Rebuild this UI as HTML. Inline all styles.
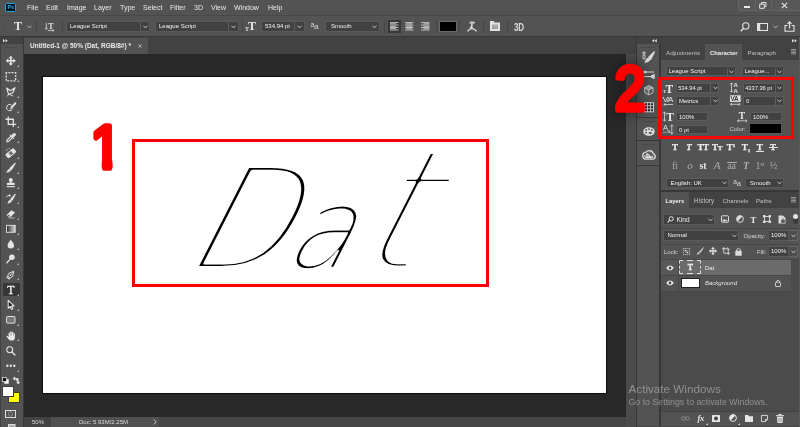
<!DOCTYPE html>
<html lang="en"><head><meta charset="utf-8"><title>Photoshop</title>
<style>
*{box-sizing:border-box;margin:0;padding:0}
html,body{width:800px;height:427px;overflow:hidden;background:#282828;font-family:"Liberation Sans",sans-serif;font-size:7px;color:#dadada;line-height:1}
.a{position:absolute}
.t{position:absolute;white-space:nowrap;line-height:8px;height:8px}
.pbg{background:#535353}
.dk{background:#424242}
.fld{position:absolute;background:#414141;border:1px solid #5a5a5a;border-radius:1px;color:#f2f2f2;font-size:6px;line-height:9px;padding-left:3px;white-space:nowrap;overflow:hidden}
.sep{position:absolute;width:1px;background:#474747}
svg{position:absolute;overflow:visible}
</style></head><body><div id="app" style="position:absolute;left:0;top:0;width:800px;height:427px;overflow:hidden;will-change:transform">

<!-- ===== menu bar ===== -->
<div class="a pbg" style="left:0;top:0;width:800px;height:15px"></div>
<div class="a" style="left:0;top:15px;width:800px;height:1px;background:#484848"></div>
<div class="a" id="pslogo" style="left:5.3px;top:2.8px;width:10.8px;height:9.6px;background:#04131d;border:1px solid #27a3dc;border-radius:1.5px;color:#2fb0ea;font-size:5.4px;font-weight:bold;line-height:7.8px;text-align:center;letter-spacing:-.2px">Ps</div>
<div class="t" style="left:27px;top:4px;color:#e8e8e8">File</div>
<div class="t" style="left:46px;top:4px;color:#e8e8e8">Edit</div>
<div class="t" style="left:67px;top:4px;color:#e8e8e8">Image</div>
<div class="t" style="left:94px;top:4px;color:#e8e8e8">Layer</div>
<div class="t" style="left:120px;top:4px;color:#e8e8e8">Type</div>
<div class="t" style="left:143px;top:4px;color:#e8e8e8">Select</div>
<div class="t" style="left:170px;top:4px;color:#e8e8e8">Filter</div>
<div class="t" style="left:194px;top:4px;color:#e8e8e8">3D</div>
<div class="t" style="left:211px;top:4px;color:#e8e8e8">View</div>
<div class="t" style="left:234px;top:4px;color:#e8e8e8">Window</div>
<div class="t" style="left:268px;top:4px;color:#e8e8e8">Help</div>
<!-- window controls -->
<div class="a" id="winctl" style="left:738px;top:0;width:64px;height:10.5px;background:#575757;border:1px solid #646464;border-top:0;border-radius:0 0 0 2px"></div>
<div class="a" style="left:755px;top:0;width:1px;height:10px;background:#646464"></div>
<div class="a" style="left:771px;top:0;width:1px;height:10px;background:#646464"></div>
<div class="a" style="left:744px;top:6.4px;width:6px;height:1.4px;background:#e6e6e6"></div>
<svg style="left:759px;top:2px" width="8" height="7" viewBox="0 0 8 7"><path d="M2.5 2V.5H7V4.5H5.5M.7 2.2H5.3V6.3H.7Z" fill="none" stroke="#e6e6e6" stroke-width="1"/></svg>
<svg style="left:781px;top:2px" width="7" height="7" viewBox="0 0 7 7"><path d="M.8.8L6.2 6.2M6.2.8L.8 6.2" fill="none" stroke="#e6e6e6" stroke-width="1.1"/></svg>

<!-- ===== options bar ===== -->
<div class="a pbg" style="left:0;top:16px;width:800px;height:20px"></div>
<div class="a" style="left:0;top:36px;width:800px;height:1px;background:#383838"></div>
<div id="optbar">
<div class="a" style="left:3px;top:21px;width:1.2px;height:11px;background:repeating-linear-gradient(#474747 0 1px,#535353 1px 2px)"></div>
<div class="t" style="left:14px;top:20px;font-family:'Liberation Serif',serif;font-weight:bold;font-size:12px;line-height:12px;height:12px;color:#e8e8e8">T</div>
<svg style="left:27px;top:25px" width="5" height="4" viewBox="0 0 5 4"><path d="M.5.7L2.5 2.9L4.5.7" fill="none" stroke="#bdbdbd" stroke-width=".9"/></svg>
<div class="sep" style="left:36px;top:20px;height:13px"></div>
<!-- orientation icon -->
<svg style="left:44.5px;top:21.5px" width="9.8" height="9.8" viewBox="0 0 11 11"><path d="M1.5 1V8M.2 6.6L1.5 8.2L2.8 6.6M3 9.5H10M8.6 8.2L10.2 9.5L8.6 10.8" fill="none" stroke="#dcdcdc" stroke-width=".9"/><text x="3.6" y="7.6" font-family="Liberation Serif,serif" font-weight="bold" font-size="9" fill="#e4e4e4">T</text></svg>
<div class="sep" style="left:62px;top:20px;height:13px"></div>
<div class="fld" style="left:66px;top:21px;width:84px;height:11px">League Script</div>
<div class="a" style="left:140px;top:22px;width:1px;height:9px;background:#5e5e5e"></div>
<svg style="left:143px;top:25px" width="5" height="4" viewBox="0 0 5 4"><path d="M.5.7L2.5 2.9L4.5.7" fill="none" stroke="#cfcfcf" stroke-width=".9"/></svg>
<div class="fld" style="left:155px;top:21px;width:84px;height:11px">League Script</div>
<div class="a" style="left:228px;top:22px;width:1px;height:9px;background:#5e5e5e"></div>
<svg style="left:231px;top:25px" width="5" height="4" viewBox="0 0 5 4"><path d="M.5.7L2.5 2.9L4.5.7" fill="none" stroke="#cfcfcf" stroke-width=".9"/></svg>
<div class="sep" style="left:242px;top:20px;height:13px"></div>
<!-- tT size icon -->
<div class="t" style="left:245px;top:26px;font-family:'Liberation Serif',serif;font-weight:bold;font-size:6px;line-height:6px;height:6px;color:#e4e4e4">T</div>
<div class="t" style="left:248px;top:20px;font-family:'Liberation Serif',serif;font-weight:bold;font-size:12px;line-height:12px;height:12px;color:#e8e8e8">T</div>
<div class="fld" style="left:261px;top:21px;width:44px;height:11px">534.94 pt</div>
<div class="a" style="left:294px;top:22px;width:1px;height:9px;background:#5e5e5e"></div>
<svg style="left:297px;top:25px" width="5" height="4" viewBox="0 0 5 4"><path d="M.5.7L2.5 2.9L4.5.7" fill="none" stroke="#cfcfcf" stroke-width=".9"/></svg>
<div class="t" style="left:310.5px;top:21px;font-size:7px;color:#d6d6d6">a</div>
<div class="t" style="left:314px;top:23px;font-size:8px;color:#d6d6d6">a</div>
<div class="fld" style="left:325px;top:21px;width:55px;height:11px;padding-left:5px">Smooth</div>
<svg style="left:372px;top:25px" width="5" height="4" viewBox="0 0 5 4"><path d="M.5.7L2.5 2.9L4.5.7" fill="none" stroke="#cfcfcf" stroke-width=".9"/></svg>
<div class="sep" style="left:384px;top:20px;height:13px"></div>
<!-- align buttons -->
<div class="a" style="left:388px;top:20px;width:13px;height:13px;background:#383838"></div>
<svg style="left:390.3px;top:22px" width="8.5" height="8.6" viewBox="0 0 9 8.8"><path d="M0 0.5H9M0 1.8H6.3M0 3.1H9M0 4.4H6.3M0 5.7H9M0 7H6.3M0 8.3H9" stroke="#c6c6c6" stroke-width="1"/></svg>
<svg style="left:405.3px;top:22px" width="8.5" height="8.6" viewBox="0 0 9 8.8"><path d="M0 0.5H9M1.4 1.8H7.6M0 3.1H9M1.4 4.4H7.6M0 5.7H9M1.4 7H7.6M0 8.3H9" stroke="#c6c6c6" stroke-width="1"/></svg>
<svg style="left:420.5px;top:22px" width="8.5" height="8.6" viewBox="0 0 9 8.8"><path d="M0 0.5H9M2.7 1.8H9M0 3.1H9M2.7 4.4H9M0 5.7H9M2.7 7H9M0 8.3H9" stroke="#c6c6c6" stroke-width="1"/></svg>
<div class="sep" style="left:436px;top:20px;height:13px"></div>
<div class="a" style="left:439px;top:21px;width:18px;height:11px;background:#000;border:1px solid #6a6a6a"></div>
<div class="sep" style="left:459px;top:20px;height:13px"></div>
<!-- warp text icon -->
<svg style="left:467px;top:21px" width="10" height="11" viewBox="0 0 10 11"><text x="2.2" y="6.8" font-family="Liberation Serif,serif" font-weight="bold" font-style="italic" font-size="8" fill="#e2e2e2" stroke="#e2e2e2" stroke-width=".3">T</text><path d="M.5 10.2Q5 5.2 9.5 10.2" fill="none" stroke="#e2e2e2" stroke-width="1.3"/></svg>
<div class="sep" style="left:483px;top:20px;height:13px"></div>
<!-- panels icon -->
<svg style="left:490px;top:21px" width="10" height="10" viewBox="0 0 10 10"><path d="M0 0H4.2V1.6H10V10H0Z" fill="#e2e2e2"/><path d="M2.2 3.6H7.8V8H2.2Z" fill="#8a8a8a"/><path d="M2.2 5H7.8M4.2 3.6V8M6 3.6V8" stroke="#e2e2e2" stroke-width=".5"/></svg>
<div class="sep" style="left:507px;top:20px;height:13px"></div>
<div class="t" style="left:514.3px;top:21.6px;font-size:11.4px;line-height:10px;height:10px;font-weight:bold;color:#dcdcdc;transform:scaleX(.7);transform-origin:0 0;letter-spacing:-.3px">3D</div>
<!-- right icons -->
<svg style="left:740px;top:22px" width="10" height="10" viewBox="0 0 10 10"><circle cx="5.8" cy="3.9" r="3.1" fill="none" stroke="#e4e4e4" stroke-width="1.1"/><path d="M3.6 6.2L.8 9.2" stroke="#e4e4e4" stroke-width="1.3"/></svg>
<svg style="left:757px;top:23px" width="11" height="8" viewBox="0 0 11 8"><rect x=".5" y=".5" width="10" height="7" fill="none" stroke="#e4e4e4" stroke-width="1"/><path d="M1 1H3.2V7H1Z" fill="#e4e4e4"/></svg>
<svg style="left:773px;top:25px" width="5" height="4" viewBox="0 0 5 4"><path d="M.5.7L2.5 2.9L4.5.7" fill="none" stroke="#bdbdbd" stroke-width=".9"/></svg>
<svg style="left:784px;top:21px" width="11" height="11" viewBox="0 0 11 11"><path d="M3.5 4.5H1V10.3H10V4.5H7.5" fill="none" stroke="#e4e4e4" stroke-width="1.1"/><path d="M5.5 7.5V1M3.4 2.9L5.5.8L7.6 2.9" fill="none" stroke="#e4e4e4" stroke-width="1.1"/></svg>
</div>

<!-- ===== document tab bar ===== -->
<div class="a dk" style="left:24px;top:37px;width:612px;height:17px"></div>
<div class="a pbg" style="left:24px;top:38px;width:124px;height:16px"></div>
<div class="t" style="left:30px;top:42px;font-weight:bold;font-size:6.5px;color:#e8e8e8">Untitled-1 @ 50% (Dat, RGB/8#) *</div>
<svg style="left:137.5px;top:43.5px" width="4" height="4" viewBox="0 0 5 5"><path d="M.5.5L4.5 4.5M4.5.5L.5 4.5" stroke="#bcbcbc" stroke-width="1.1"/></svg>

<!-- ===== canvas & doc ===== -->
<div class="a" style="left:43px;top:76.7px;width:563px;height:316.8px;background:#fff;box-shadow:0 0 0 1.1px #0e0e0e"></div>
<div id="art">
<svg style="left:0;top:0" width="800" height="427" viewBox="0 0 800 427">
<text transform="translate(180,268) skewX(-27) scale(.95,1)" font-family="DejaVu Sans Light,DejaVu Sans,Liberation Sans,sans-serif" font-weight="200" fill="#000" stroke="#fff" stroke-linejoin="round" vector-effect="non-scaling-stroke"><tspan x="0" font-size="140" stroke-width="4">D</tspan><tspan x="106" font-size="112" stroke-width="2.5">a</tspan><tspan x="181" font-size="166" stroke-width="5">t</tspan></text>
</svg>
</div>

<!-- ===== status bar ===== -->
<div class="a" style="left:24px;top:417px;width:602px;height:10px;background:#464646"></div>
<div class="a" style="left:51px;top:417px;width:108px;height:10px;background:#505050"></div>
<div class="a" style="left:24px;top:417px;width:27px;height:10px;background:#424242"></div>
<div class="t" style="left:32px;top:418px;font-size:6px">50%</div>
<div class="t" style="left:79px;top:418px;font-size:6px">Doc: 5.93M/2.25M</div>
<svg style="left:153px;top:419px" width="4" height="6" viewBox="0 0 4 6"><path d="M.7.5L3.2 3L.7 5.5" fill="none" stroke="#d0d0d0" stroke-width=".9"/></svg>

<!-- ===== right scrollbar ===== -->
<div class="a" style="left:626px;top:54px;width:10px;height:373px;background:#4b4b4b"></div>

<!-- ===== left toolbar ===== -->
<div class="a pbg" style="left:0;top:37px;width:23px;height:390px"></div>
<div class="a" style="left:23px;top:37px;width:1px;height:390px;background:#383838"></div>
<div class="a dk" style="left:0;top:37px;width:23px;height:7px"></div>
<div id="tools">
<div class="a" style="left:0;top:37px;width:1px;height:390px;background:#404040"></div>
<svg style="left:3.3px;top:39px" width="5" height="3.4" viewBox="0 0 5 3.4"><path d="M0 0L2.2 1.7L0 3.4ZM2.6 0L4.8 1.7L2.6 3.4Z" fill="#e0e0e0"/></svg>
<div class="a" style="left:5px;top:47px;width:12px;height:1px;background:#484848"></div>
<div class="a" style="left:3px;top:283px;width:17px;height:13px;background:#363636;border-radius:1px"></div>
<svg style="left:5.8px;top:56.4px" width="9.6" height="9.6" viewBox="0 0 11 11"><path d="M5.5 -.3L8 2.7H6.4V4.6H8.3V3L11.3 5.5L8.3 8V6.4H6.4V8.3H8L5.5 11.3L3 8.3H4.6V6.4H2.7V8L-.3 5.5L2.7 3V4.6H4.6V2.7H3Z" fill="#e4e4e4"/></svg>
<svg style="left:17px;top:65.2px" width="2" height="2" viewBox="0 0 2 2"><path d="M2 0V2H0Z" fill="#bdbdbd"/></svg>
<svg style="left:5.8px;top:71.6px" width="9.6" height="9.6" viewBox="0 0 11 11"><rect x=".3" y=".8" width="10.8" height="9.4" fill="none" stroke="#e4e4e4" stroke-width="1.5" stroke-dasharray="2.2 1.4" stroke-dashoffset="1.1"/></svg>
<svg style="left:17px;top:80.4px" width="2" height="2" viewBox="0 0 2 2"><path d="M2 0V2H0Z" fill="#bdbdbd"/></svg>
<svg style="left:5.8px;top:86.9px" width="9.6" height="9.6" viewBox="0 0 11 11"><path d="M.8 1.2L5 4.3L10.4 .8L7.8 6.6L3 8.6Z" fill="none" stroke="#e4e4e4" stroke-width="1.3" stroke-linejoin="round"/><path d="M3 8.6L1.2 10.8M3.4 8.4L8.4 10.4" stroke="#e4e4e4" stroke-width="1"/></svg>
<svg style="left:17px;top:95.7px" width="2" height="2" viewBox="0 0 2 2"><path d="M2 0V2H0Z" fill="#bdbdbd"/></svg>
<svg style="left:5.8px;top:102.1px" width="9.6" height="9.6" viewBox="0 0 11 11"><path d="M6.2 3.4A3.6 3.6 0 1 0 7.6 7.6" fill="none" stroke="#e4e4e4" stroke-width="1.1"/><path d="M5.2 7.6L6.6 6" stroke="#e4e4e4" stroke-width="1.4" stroke-linecap="round"/><path d="M7 5.6L10.6 1.6" stroke="#e4e4e4" stroke-width="2.4" stroke-linecap="round"/></svg>
<svg style="left:17px;top:110.9px" width="2" height="2" viewBox="0 0 2 2"><path d="M2 0V2H0Z" fill="#bdbdbd"/></svg>
<svg style="left:5.8px;top:117.3px" width="9.6" height="9.6" viewBox="0 0 11 11"><path d="M2.6 -.6V8.4H11.6M-.6 2.6H8.4V11.6" fill="none" stroke="#e4e4e4" stroke-width="1.5"/></svg>
<svg style="left:17px;top:126.1px" width="2" height="2" viewBox="0 0 2 2"><path d="M2 0V2H0Z" fill="#bdbdbd"/></svg>
<svg style="left:5.8px;top:132.6px" width="9.6" height="9.6" viewBox="0 0 11 11"><path d="M.8 10.2L1.3 8L5.8 3.5L7.5 5.2L3 9.7Z" fill="none" stroke="#e4e4e4" stroke-width="1.3" stroke-linejoin="round"/><path d="M5 2.4L8.6 6M6.8 3.2L8.5 1.2Q9.6 .3 10.4 1.1Q11.2 2 10 3L8 4.6Z" fill="#e4e4e4" stroke="#e4e4e4" stroke-width="1.4" stroke-linecap="round"/></svg>
<svg style="left:17px;top:141.4px" width="2" height="2" viewBox="0 0 2 2"><path d="M2 0V2H0Z" fill="#bdbdbd"/></svg>
<svg style="left:5.8px;top:147.8px" width="9.6" height="9.6" viewBox="0 0 11 11"><g transform="rotate(-40 5.5 6) translate(5.5 6) scale(1.12) translate(-5.5 -6)"><rect x="0" y="3.3" width="11" height="5.4" rx="1.5" fill="#e4e4e4"/><rect x="3.8" y="4.3" width="3.4" height="3.4" fill="#535353"/><circle cx="4.8" cy="5.3" r=".4" fill="#e4e4e4"/><circle cx="6.2" cy="5.3" r=".4" fill="#e4e4e4"/><circle cx="4.8" cy="6.7" r=".4" fill="#e4e4e4"/><circle cx="6.2" cy="6.7" r=".4" fill="#e4e4e4"/></g><path d="M.6 3.4Q1.6 -.2 4.6 .8" fill="none" stroke="#e4e4e4" stroke-width=".9" stroke-dasharray="1.2 .7"/></svg>
<svg style="left:17px;top:156.6px" width="2" height="2" viewBox="0 0 2 2"><path d="M2 0V2H0Z" fill="#bdbdbd"/></svg>
<svg style="left:5.8px;top:163.0px" width="9.6" height="9.6" viewBox="0 0 11 11"><path d="M10.4 .4L4.6 6.2L6 7.6Z" fill="#e4e4e4" stroke="#e4e4e4" stroke-width="1.3" stroke-linejoin="round"/><path d="M3.9 6.8Q1.8 7.4 .6 10.8Q4.4 10.6 5.6 8.4Z" fill="#e4e4e4" stroke="#e4e4e4" stroke-width=".5"/></svg>
<svg style="left:17px;top:171.8px" width="2" height="2" viewBox="0 0 2 2"><path d="M2 0V2H0Z" fill="#bdbdbd"/></svg>
<svg style="left:5.8px;top:178.2px" width="9.6" height="9.6" viewBox="0 0 11 11"><circle cx="5.5" cy="2.3" r="2.3" fill="#e4e4e4"/><path d="M4.4 3.5H6.6V5.6H4.4Z" fill="#e4e4e4"/><path d="M2 5.4H9Q10 5.4 10 6.4V8H1V6.4Q1 5.4 2 5.4Z" fill="#e4e4e4"/><path d="M.8 9.9H10.2" stroke="#e4e4e4" stroke-width="1.3"/></svg>
<svg style="left:17px;top:187.0px" width="2" height="2" viewBox="0 0 2 2"><path d="M2 0V2H0Z" fill="#bdbdbd"/></svg>
<svg style="left:5.8px;top:193.5px" width="9.6" height="9.6" viewBox="0 0 11 11"><path d="M10.6 .4L5.6 5.8L7 7.2Z" fill="#e4e4e4" stroke="#e4e4e4" stroke-width="1.2" stroke-linejoin="round"/><path d="M4.9 6.4Q3 7 2 10.8Q5.4 10.4 6.6 8Z" fill="#e4e4e4" stroke="#e4e4e4" stroke-width=".4"/><path d="M.4 3.8Q1.6 1 4.6 1.6" fill="none" stroke="#e4e4e4" stroke-width="1.1"/><path d="M3.4 .2L5.8 1.8L3.4 3.4Z" fill="#e4e4e4"/></svg>
<svg style="left:17px;top:202.3px" width="2" height="2" viewBox="0 0 2 2"><path d="M2 0V2H0Z" fill="#bdbdbd"/></svg>
<svg style="left:5.8px;top:208.7px" width="9.6" height="9.6" viewBox="0 0 11 11"><path d="M1 6.5L6 1.5L10.5 4L5.5 9H3Z" fill="#e4e4e4"/><path d="M1 6.5L3 9H5.5L3.5 6.3Z" fill="#535353" stroke="#e4e4e4" stroke-width=".7"/><path d="M3 10.3H10" stroke="#e4e4e4" stroke-width=".8"/></svg>
<svg style="left:17px;top:217.5px" width="2" height="2" viewBox="0 0 2 2"><path d="M2 0V2H0Z" fill="#bdbdbd"/></svg>
<svg style="left:5.8px;top:223.9px" width="9.6" height="9.6" viewBox="0 0 11 11"><defs><linearGradient id="gg" x1="0" x2="1"><stop offset="0" stop-color="#2a2a2a"/><stop offset="1" stop-color="#d8d8d8"/></linearGradient></defs><rect x=".5" y="1.5" width="10" height="8" fill="url(#gg)" stroke="#e4e4e4" stroke-width="1"/></svg>
<svg style="left:17px;top:232.7px" width="2" height="2" viewBox="0 0 2 2"><path d="M2 0V2H0Z" fill="#bdbdbd"/></svg>
<svg style="left:5.8px;top:239.2px" width="9.6" height="9.6" viewBox="0 0 11 11"><path d="M5.5 .8Q9.2 5.2 9.2 7.2A3.7 3.7 0 0 1 1.8 7.2Q1.8 5.2 5.5 .8Z" fill="#e4e4e4"/></svg>
<svg style="left:17px;top:248.0px" width="2" height="2" viewBox="0 0 2 2"><path d="M2 0V2H0Z" fill="#bdbdbd"/></svg>
<svg style="left:5.8px;top:254.4px" width="9.6" height="9.6" viewBox="0 0 11 11"><circle cx="6.8" cy="3.8" r="3.2" fill="#e4e4e4"/><path d="M4.6 6.2L1 10" stroke="#e4e4e4" stroke-width="1.5" stroke-linecap="round"/></svg>
<svg style="left:17px;top:263.2px" width="2" height="2" viewBox="0 0 2 2"><path d="M2 0V2H0Z" fill="#bdbdbd"/></svg>
<svg style="left:5.8px;top:269.6px" width="9.6" height="9.6" viewBox="0 0 11 11"><g transform="rotate(40 5.5 5.5)"><path d="M5.5 .2L8.3 5.5L7.3 9H3.7L2.7 5.5Z" fill="none" stroke="#e4e4e4" stroke-width="1"/><path d="M5.5 1V5.5" stroke="#e4e4e4" stroke-width=".8"/><circle cx="5.5" cy="6" r=".9" fill="#e4e4e4"/><rect x="3.2" y="9.6" width="4.6" height="1.4" fill="#e4e4e4"/></g></svg>
<svg style="left:17px;top:278.4px" width="2" height="2" viewBox="0 0 2 2"><path d="M2 0V2H0Z" fill="#bdbdbd"/></svg>
<svg style="left:5.8px;top:284.9px" width="9.6" height="9.6" viewBox="0 0 11 11"><text x="5.5" y="10" text-anchor="middle" font-family="Liberation Serif,serif" font-size="13.5" fill="#f4f4f4" stroke="#f4f4f4" stroke-width=".35">T</text></svg>
<svg style="left:17px;top:293.7px" width="2" height="2" viewBox="0 0 2 2"><path d="M2 0V2H0Z" fill="#bdbdbd"/></svg>
<svg style="left:5.8px;top:300.1px" width="9.6" height="9.6" viewBox="0 0 11 11"><path d="M2.5 .5V9.5L4.8 7.4L6.3 10.8L7.8 10.1L6.3 6.8H9.2Z" fill="#1e1e1e" stroke="#f0f0f0" stroke-width="1.15" stroke-linejoin="round"/></svg>
<svg style="left:17px;top:308.9px" width="2" height="2" viewBox="0 0 2 2"><path d="M2 0V2H0Z" fill="#bdbdbd"/></svg>
<svg style="left:5.8px;top:315.3px" width="9.6" height="9.6" viewBox="0 0 11 11"><rect x=".7" y="1.7" width="9.6" height="7.6" rx=".8" fill="#777" stroke="#e4e4e4" stroke-width="1.1"/></svg>
<svg style="left:17px;top:324.1px" width="2" height="2" viewBox="0 0 2 2"><path d="M2 0V2H0Z" fill="#bdbdbd"/></svg>
<svg style="left:5.8px;top:330.5px" width="9.6" height="9.6" viewBox="0 0 11 11"><path d="M3 6.4V2.4a.8.8 0 0 1 1.6 0V5.4h.3V1.2a.8.8 0 0 1 1.6 0V5.4h.3V1.7a.8.8 0 0 1 1.6 0V5.6h.3V3.2a.75.75 0 0 1 1.5 0V7.4Q10.2 11 7 11H5.6Q4 11 3 9.4L.5 6.3Q.3 5 1.6 5.4L3 6.9Z" fill="#e8e8e8"/></svg>
<svg style="left:17px;top:339.3px" width="2" height="2" viewBox="0 0 2 2"><path d="M2 0V2H0Z" fill="#bdbdbd"/></svg>
<svg style="left:5.8px;top:345.8px" width="9.6" height="9.6" viewBox="0 0 11 11"><circle cx="4.3" cy="4.3" r="3.4" fill="none" stroke="#e4e4e4" stroke-width="1.2"/><path d="M6.8 6.8L10.2 10.2" stroke="#e4e4e4" stroke-width="1.6" stroke-linecap="round"/></svg>

<svg style="left:5.8px;top:361.0px" width="9.6" height="9.6" viewBox="0 0 11 11"><circle cx="1.5" cy="5.5" r="1.35" fill="#e6e6e6"/><circle cx="5.5" cy="5.5" r="1.35" fill="#e6e6e6"/><circle cx="9.5" cy="5.5" r="1.35" fill="#e6e6e6"/></svg>
<svg style="left:17px;top:370.3px" width="2" height="2" viewBox="0 0 2 2"><path d="M2 0V2H0Z" fill="#bdbdbd"/></svg>
<svg style="left:2px;top:377px" width="7" height="7" viewBox="0 0 7 7"><rect x="2.5" y="2.5" width="4" height="4" fill="#fff" stroke="#ddd" stroke-width=".6"/><rect x=".5" y=".5" width="4" height="4" fill="#111" stroke="#ddd" stroke-width=".8"/></svg>
<svg style="left:13px;top:377px" width="7" height="7" viewBox="0 0 7 7"><path d="M1.5 1.5H5.2V5.5M0 1.5L1.8 0V3ZM5.2 7L3.7 5.2H6.7Z" fill="#ddd" stroke="#ddd" stroke-width=".8"/></svg>
<div class="a" style="left:8.3px;top:392.3px;width:12px;height:11px;background:#ffff00;border:.7px solid #3c3c3c"></div>
<div class="a" style="left:2.3px;top:386.3px;width:12px;height:11px;background:#fff;border:.7px solid #3c3c3c"></div>
<svg style="left:5px;top:410px" width="11" height="8" viewBox="0 0 11 8"><rect x=".5" y=".5" width="10" height="7" fill="none" stroke="#dcdcdc" stroke-width="1"/><circle cx="5.5" cy="4" r="2" fill="none" stroke="#dcdcdc" stroke-width=".7" stroke-dasharray="1 .6"/></svg>
<svg style="left:8px;top:424px" width="7.5" height="3" viewBox="0 0 7.5 3"><rect x=".5" y=".5" width="6.5" height="4" fill="#aaa" stroke="#dcdcdc" stroke-width="1"/></svg>
</div>

<!-- ===== right dock ===== -->
<div class="a" style="left:636px;top:37px;width:164px;height:390px;background:#383838"></div>
<div class="a dk" style="left:637px;top:37px;width:163px;height:7px"></div>
<div class="a pbg" style="left:637px;top:44px;width:22.3px;height:120.5px"></div>
<div class="a" style="left:637px;top:165.5px;width:22.3px;height:262px;background:#525252"></div>
<div id="strip">
<svg style="left:652px;top:39px" width="5" height="3.4" viewBox="0 0 5 3.4"><path d="M2.2 0L0 1.7L2.2 3.4ZM4.8 0L2.6 1.7L4.8 3.4Z" fill="#e0e0e0"/></svg>
<svg style="left:791.5px;top:39px" width="5" height="3.4" viewBox="0 0 5 3.4"><path d="M0 0L2.2 1.7L0 3.4ZM2.6 0L4.8 1.7L2.6 3.4Z" fill="#e0e0e0"/></svg>
<div class="a" style="left:642px;top:47px;width:13px;height:1px;background:#484848"></div>
<div class="a" style="left:637px;top:117px;width:23px;height:1px;background:#383838"></div>
<div class="a" style="left:642px;top:121px;width:13px;height:1px;background:#484848"></div>
<div class="a" style="left:637px;top:140px;width:23px;height:1px;background:#383838"></div>
<div class="a" style="left:642px;top:144px;width:13px;height:1px;background:#484848"></div>
<!-- brush settings -->
<svg style="left:642px;top:51px" width="13" height="12" viewBox="0 0 13 12"><path d="M1 1H3V3H1ZM1 4H3V8H1Z" fill="none" stroke="#dcdcdc" stroke-width=".8"/><path d="M12.2 1L7 6.2L8.8 8Z" fill="#dcdcdc" stroke="#dcdcdc" stroke-width="1.5" stroke-linejoin="round"/><path d="M6.2 6.8Q3.8 7.6 2.8 11.8Q7.2 11.2 8.4 8.6Z" fill="#dcdcdc" stroke="#dcdcdc" stroke-width=".5"/></svg>
<!-- brush presets -->
<svg style="left:642px;top:70px" width="13" height="10" viewBox="0 0 13 10"><path d="M0 2H12M0 6.5H12" stroke="#dcdcdc" stroke-width="1"/><circle cx="3.3" cy="2" r="1.6" fill="#dcdcdc"/><path d="M8.5 6.5Q9 4.6 11.5 4.4V8.6Q9 8.4 8.5 6.5Z" fill="#dcdcdc"/><rect x="11.3" y="4" width="1.4" height="5" fill="#dcdcdc"/></svg>
<!-- 3D cube -->
<svg style="left:644px;top:85px" width="9.6" height="10.4" viewBox="0 0 11 12"><path d="M5.5.6L10.4 3.2L5.5 5.8L.6 3.2Z" fill="#9a9a9a"/><path d="M.6 3.2L5.5 5.8V11.4L.6 8.8Z" fill="#6e6e6e"/><path d="M5.5.6L10.4 3.2V8.8L5.5 11.4L.6 8.8V3.2ZM.6 3.2L5.5 5.8L10.4 3.2M5.5 5.8V11.4" fill="none" stroke="#dcdcdc" stroke-width=".9" stroke-linejoin="round"/></svg>
<!-- swatches grid -->
<svg style="left:643.8px;top:102px" width="10" height="10.5" viewBox="0 0 11 11"><rect x=".5" y=".5" width="10" height="10" fill="#2c2c2c" stroke="#dcdcdc" stroke-width="1"/><path d="M3.8 0V11M7.2 0V11M0 3.8H11M0 7.2H11" stroke="#dcdcdc" stroke-width=".9"/></svg>
<!-- palette -->
<svg style="left:643px;top:127px" width="12" height="9" viewBox="0 0 12 9"><path d="M6 .3C9.4.3 11.7 2 11.7 4.4C11.7 6.8 9.4 8.7 6 8.7C2.6 8.7.3 6.8.3 4.4C.3 2 2.6.3 6 .3Z" fill="#dcdcdc"/><circle cx="3.2" cy="3" r=".9" fill="#535353"/><circle cx="6" cy="2.1" r=".9" fill="#535353"/><circle cx="8.8" cy="3" r=".9" fill="#535353"/><circle cx="3" cy="5.6" r=".9" fill="#535353"/><ellipse cx="7.2" cy="6" rx="1.7" ry="1.1" fill="#535353"/></svg>
<!-- CC -->
<svg style="left:642px;top:150px" width="14" height="10" viewBox="0 0 14 10"><path d="M4.4 9.2C2 9.2.7 7.6.7 5.7C.7 3.8 2 2.4 3.9 2.2C4.8 1 6 .6 7.2.6C9.4.6 10.9 2 11.3 3.6C12.6 4 13.3 5 13.3 6.3C13.3 8 12 9.2 10.3 9.2Z" fill="#5e5e5e" stroke="#dcdcdc" stroke-width="1.3"/><path d="M10.8 6.6C9.4 8.2 6.6 7.8 5 6C3.9 4.7 4.6 3.4 5.8 4.2L9.4 7.4M2.8 5.8C3.2 7.8 6 8.2 7.4 7" fill="none" stroke="#dcdcdc" stroke-width="1.2" stroke-linecap="round"/></svg>
</div>
<!-- character panel -->
<div class="a dk" style="left:661px;top:44px;width:139px;height:17px"></div>
<div class="a pbg" style="left:661px;top:60px;width:139px;height:130px"></div>
<div class="a pbg" style="left:705px;top:44px;width:37px;height:17px"></div>
<div id="charpanel">
<div class="t" style="left:666px;top:48.5px;font-size:6.2px;color:#c2c2c2">Adjustments</div>
<div class="t" style="left:710px;top:48.5px;font-size:5.9px;font-weight:bold;color:#f0f0f0">Character</div>
<div class="t" style="left:747.5px;top:48.5px;font-size:6.1px;color:#c2c2c2">Paragraph</div>
<svg style="left:790.5px;top:49px" width="5" height="5" viewBox="0 0 5 5"><path d="M0 .5H5M0 2H5M0 3.5H5M0 5H5" stroke="#a8a8a8" stroke-width=".8"/></svg>
<div class="fld" style="left:666px;top:66.2px;width:70px;height:10.3px;padding-left:1.5px">League Script</div>
<div class="a" style="left:726.5px;top:67.5px;width:1px;height:8.5px;background:#5e5e5e"></div>
<svg style="left:729px;top:70px" width="5" height="4" viewBox="0 0 5 4"><path d="M.5.7L2.5 2.9L4.5.7" fill="none" stroke="#cfcfcf" stroke-width=".9"/></svg>
<div class="fld" style="left:742px;top:66.2px;width:42px;height:10.3px;padding-left:1.5px">League...</div>
<div class="a" style="left:775px;top:67.5px;width:1px;height:8.5px;background:#5e5e5e"></div>
<svg style="left:777px;top:70px" width="5" height="4" viewBox="0 0 5 4"><path d="M.5.7L2.5 2.9L4.5.7" fill="none" stroke="#cfcfcf" stroke-width=".9"/></svg>
<div class="t" style="left:663px;top:88.5px;font-family:'Liberation Serif',serif;font-weight:bold;font-size:5px;line-height:5px;height:5px;color:#e4e4e4">T</div>
<div class="t" style="left:665.6px;top:82.5px;font-family:'Liberation Serif',serif;font-weight:bold;font-size:11.5px;line-height:12px;height:12px;color:#ececec">T</div>
<div class="fld" style="left:676px;top:83px;width:43px;height:9.5px;line-height:8px;padding-left:1.2px;font-size:5.7px">534.94 pt</div>
<div class="a" style="left:710px;top:84px;width:1px;height:7.5px;background:#5e5e5e"></div>
<svg style="left:712.5px;top:86px" width="5" height="4" viewBox="0 0 5 4"><path d="M.5.7L2.5 2.9L4.5.7" fill="none" stroke="#cfcfcf" stroke-width=".9"/></svg>
<svg style="left:730px;top:82px" width="11" height="11" viewBox="0 0 11 11"><path d="M1.5 1V10M.2 2.4L1.5 .8L2.8 2.4M.2 8.6L1.5 10.2L2.8 8.6" fill="none" stroke="#dcdcdc" stroke-width=".8"/><text x="3.6" y="4.8" font-family="Liberation Sans,sans-serif" font-weight="bold" font-size="6" fill="#e4e4e4">A</text><text x="3.6" y="10.6" font-family="Liberation Sans,sans-serif" font-weight="bold" font-size="6" fill="#e4e4e4">A</text></svg>
<div class="fld" style="left:743px;top:83px;width:41px;height:9.5px;line-height:8px;padding-left:1.2px;font-size:5.7px">4337.36 pt</div>
<div class="a" style="left:775px;top:84px;width:1px;height:7.5px;background:#5e5e5e"></div>
<svg style="left:777px;top:86px" width="5" height="4" viewBox="0 0 5 4"><path d="M.5.7L2.5 2.9L4.5.7" fill="none" stroke="#cfcfcf" stroke-width=".9"/></svg>
<svg style="left:663px;top:95px" width="11" height="11" viewBox="0 0 11 11"><text x="-.3" y="6.5" font-family="Liberation Sans,sans-serif" font-size="8" fill="#e6e6e6" letter-spacing="-1.1">V/A</text><path d="M1 9.5H10M2.4 8.3L.8 9.5L2.4 10.7" fill="none" stroke="#dcdcdc" stroke-width=".8"/></svg>
<div class="fld" style="left:676px;top:96px;width:43px;height:9.5px;line-height:8px;padding-left:2px">Metrics</div>
<div class="a" style="left:710px;top:97px;width:1px;height:7.5px;background:#5e5e5e"></div>
<svg style="left:712.5px;top:99px" width="5" height="4" viewBox="0 0 5 4"><path d="M.5.7L2.5 2.9L4.5.7" fill="none" stroke="#cfcfcf" stroke-width=".9"/></svg>
<svg style="left:730px;top:95px" width="11" height="11" viewBox="0 0 11 11"><rect x="0" y=".3" width="10.6" height="6.6" fill="#e6e6e6"/><text x=".6" y="6.2" font-family="Liberation Sans,sans-serif" font-weight="bold" font-size="6.4" fill="#333" letter-spacing="-.5">VA</text><path d="M.5 9.3H10.1M2 8.1L.5 9.3L2 10.5M8.6 8.1L10.1 9.3L8.6 10.5" fill="none" stroke="#dcdcdc" stroke-width=".8"/></svg>
<div class="fld" style="left:743px;top:96px;width:41px;height:9.5px;line-height:8px;padding-left:2px">0</div>
<div class="a" style="left:775px;top:97px;width:1px;height:7.5px;background:#5e5e5e"></div>
<svg style="left:777px;top:99px" width="5" height="4" viewBox="0 0 5 4"><path d="M.5.7L2.5 2.9L4.5.7" fill="none" stroke="#cfcfcf" stroke-width=".9"/></svg>
<svg style="left:663px;top:110.5px" width="11" height="11" viewBox="0 0 11 11"><path d="M1.5 1V10M.2 2.4L1.5 .8L2.8 2.4M.2 8.6L1.5 10.2L2.8 8.6" fill="none" stroke="#dcdcdc" stroke-width=".8"/><text x="3.2" y="9.6" font-family="Liberation Serif,serif" font-weight="bold" font-size="11.5" fill="#ececec">T</text></svg>
<div class="fld" style="left:676px;top:111.5px;width:31.5px;height:9.5px;line-height:8px;padding-left:2px">100%</div>
<svg style="left:737px;top:110.5px" width="11" height="11" viewBox="0 0 11 11"><text x="1.8" y="7.6" font-family="Liberation Serif,serif" font-weight="bold" font-size="9.5" fill="#ececec">T</text><path d="M.5 9.8H10.1M2 8.6L.5 9.8L2 11M8.6 8.6L10.1 9.8L8.6 11" fill="none" stroke="#dcdcdc" stroke-width=".8"/></svg>
<div class="fld" style="left:750px;top:111.5px;width:32px;height:9.5px;line-height:8px;padding-left:2px">100%</div>
<svg style="left:663px;top:123.5px" width="11" height="11" viewBox="0 0 11 11"><text x="0" y="6.4" font-family="Liberation Sans,sans-serif" font-size="7.5" fill="#e0e0e0">A</text><text x="4.4" y="9.4" font-family="Liberation Sans,sans-serif" font-size="5" fill="#e0e0e0">a</text><path d="M8.8 1V10M7.5 2.4L8.8 .8L10.1 2.4M7.5 8.6L8.8 10.2L10.1 8.6" fill="none" stroke="#dcdcdc" stroke-width=".8"/><path d="M0 8.2H4" stroke="#dcdcdc" stroke-width=".6"/></svg>
<div class="fld" style="left:676px;top:124.5px;width:31.5px;height:9.5px;line-height:8px;padding-left:2px">0 pt</div>
<div class="t" style="left:729.5px;top:125px;font-size:6px;color:#d0d0d0">Color:</div>
<div class="a" style="left:749px;top:123.2px;width:33px;height:11.2px;background:#000;border:.5px solid #5a5a5a"></div>
<div class="t" style="left:669px;top:142px;width:12px;text-align:center;font-family:'Liberation Serif',serif;font-weight:bold;font-size:9px;line-height:10px;height:10px;color:#f0f0f0;-webkit-text-stroke:.25px #f0f0f0;">T</div>
<div class="t" style="left:683px;top:142px;width:12px;text-align:center;font-family:'Liberation Serif',serif;font-weight:bold;font-size:9px;line-height:10px;height:10px;color:#f0f0f0;-webkit-text-stroke:.25px #f0f0f0;font-style:italic">T</div>
<div class="t" style="left:697px;top:142px;width:12px;text-align:center;font-family:'Liberation Serif',serif;font-weight:bold;font-size:9px;line-height:10px;height:10px;color:#f0f0f0;-webkit-text-stroke:.25px #f0f0f0;letter-spacing:-.6px">TT</div>
<div class="t" style="left:711px;top:142px;width:12px;text-align:center;font-family:'Liberation Serif',serif;font-weight:bold;font-size:9px;line-height:10px;height:10px;color:#f0f0f0;-webkit-text-stroke:.25px #f0f0f0;letter-spacing:-.4px">T<span style="font-size:7px">T</span></div>
<div class="t" style="left:725px;top:142px;width:12px;text-align:center;font-family:'Liberation Serif',serif;font-weight:bold;font-size:9px;line-height:10px;height:10px;color:#f0f0f0;-webkit-text-stroke:.25px #f0f0f0;">T<span style="font-size:5px;position:relative;top:-3.5px">1</span></div>
<div class="t" style="left:740px;top:142px;width:12px;text-align:center;font-family:'Liberation Serif',serif;font-weight:bold;font-size:9px;line-height:10px;height:10px;color:#f0f0f0;-webkit-text-stroke:.25px #f0f0f0;">T<span style="font-size:5px;position:relative;top:1.5px">1</span></div>
<div class="t" style="left:753.8px;top:142px;width:12px;text-align:center;font-family:'Liberation Serif',serif;font-weight:bold;font-size:9px;line-height:10px;height:10px;color:#f0f0f0;-webkit-text-stroke:.25px #f0f0f0;">T</div>
<div class="a" style="left:755.5px;top:151px;width:8.5px;height:1px;background:#e4e4e4"></div>
<div class="t" style="left:767px;top:142px;width:12px;text-align:center;font-family:'Liberation Serif',serif;font-weight:bold;font-size:9px;line-height:10px;height:10px;color:#f0f0f0;-webkit-text-stroke:.25px #f0f0f0;">T</div>
<div class="a" style="left:768.5px;top:146.6px;width:9px;height:1px;background:#e4e4e4"></div>
<div class="t" style="left:668px;top:160px;width:14px;text-align:center;font-family:'Liberation Serif',serif;font-size:10px;line-height:11px;height:11px;color:#acacac;">fi</div>
<div class="t" style="left:683px;top:160px;width:14px;text-align:center;font-family:'Liberation Serif',serif;font-size:10px;line-height:11px;height:11px;color:#acacac;font-style:italic;font-size:11px">o</div>
<div class="t" style="left:696px;top:160px;width:14px;text-align:center;font-family:'Liberation Serif',serif;font-size:10px;line-height:11px;height:11px;color:#e4e4e4;font-weight:bold">st</div>
<div class="t" style="left:710px;top:160px;width:14px;text-align:center;font-family:'Liberation Serif',serif;font-size:10px;line-height:11px;height:11px;color:#acacac;font-style:italic;font-size:11px">A</div>
<div class="t" style="left:724.5px;top:160px;width:14px;text-align:center;font-family:'Liberation Serif',serif;font-size:10px;line-height:11px;height:11px;color:#acacac;letter-spacing:-.2px">aa</div>
<div class="a" style="left:726.5px;top:162px;width:10px;height:.8px;background:#acacac"></div>
<div class="t" style="left:739px;top:160px;width:14px;text-align:center;font-family:'Liberation Serif',serif;font-size:10px;line-height:11px;height:11px;color:#acacac;font-style:italic;font-weight:bold">T</div>
<div class="t" style="left:753px;top:160px;width:14px;text-align:center;font-family:'Liberation Serif',serif;font-size:10px;line-height:11px;height:11px;color:#acacac;">1<span style="font-size:6px;position:relative;top:-3px">st</span></div>
<div class="t" style="left:766.5px;top:160px;width:14px;text-align:center;font-family:'Liberation Serif',serif;font-size:10px;line-height:11px;height:11px;color:#acacac;">&#189;</div>
<div class="fld" style="left:665.5px;top:178px;width:63.5px;height:9.5px;line-height:8px;padding-left:4px">English: UK</div>
<svg style="left:722px;top:181px" width="5" height="4" viewBox="0 0 5 4"><path d="M.5.7L2.5 2.9L4.5.7" fill="none" stroke="#cfcfcf" stroke-width=".9"/></svg>
<div class="t" style="left:733.3px;top:177.5px;font-size:6.5px;color:#d6d6d6">a</div>
<div class="t" style="left:736.8px;top:179.5px;font-size:7.5px;color:#d6d6d6">a</div>
<div class="fld" style="left:745px;top:178px;width:38.5px;height:9.5px;line-height:8px;padding-left:4px">Smooth</div>
<svg style="left:776.5px;top:181px" width="5" height="4" viewBox="0 0 5 4"><path d="M.5.7L2.5 2.9L4.5.7" fill="none" stroke="#cfcfcf" stroke-width=".9"/></svg>
</div>
<!-- layers panel -->
<div class="a dk" style="left:661px;top:192px;width:139px;height:17px"></div>
<div class="a pbg" style="left:661px;top:208px;width:139px;height:219px"></div>
<div class="a pbg" style="left:661px;top:192px;width:28px;height:17px"></div>
<div id="layers">
<div class="t" style="left:665.5px;top:196.5px;font-size:5.8px;font-weight:bold;color:#f0f0f0">Layers</div>
<div class="t" style="left:694px;top:196.5px;font-size:6.3px;letter-spacing:.1px;color:#c2c2c2">History</div>
<div class="t" style="left:722.5px;top:196.5px;font-size:6.1px;color:#c2c2c2">Channels</div>
<div class="t" style="left:756px;top:196.5px;font-size:6.1px;color:#c2c2c2">Paths</div>
<svg style="left:790.5px;top:197px" width="5" height="5" viewBox="0 0 5 5"><path d="M0 .5H5M0 2H5M0 3.5H5M0 5H5" stroke="#a8a8a8" stroke-width=".8"/></svg>
<div class="fld" style="left:663px;top:214px;width:52px;height:10.5px;padding-left:12.5px;font-size:6.5px">Kind</div>
<svg style="left:666.5px;top:216px" width="7" height="7" viewBox="0 0 7 7"><circle cx="4.2" cy="2.8" r="2.1" fill="none" stroke="#e4e4e4" stroke-width="1"/><path d="M2.7 4.3L.6 6.4" stroke="#e4e4e4" stroke-width="1.1"/></svg>
<svg style="left:708px;top:217.5px" width="5" height="4" viewBox="0 0 5 4"><path d="M.5.7L2.5 2.9L4.5.7" fill="none" stroke="#cfcfcf" stroke-width=".9"/></svg>
<svg style="left:721px;top:215px" width="8" height="8" viewBox="0 0 8 8"><rect x=".5" y=".8" width="7" height="6.4" rx=".8" fill="none" stroke="#dcdcdc" stroke-width="1"/><path d="M1.2 6.2L3 3.8L4.4 5.2L5.4 4.4L6.8 6.2Z" fill="#dcdcdc"/></svg>
<svg style="left:735.5px;top:215px" width="8" height="8" viewBox="0 0 8 8"><circle cx="4" cy="4" r="3.4" fill="none" stroke="#dcdcdc" stroke-width="1"/><path d="M1.6 6.4A3.4 3.4 0 0 1 6.4 1.6Z" fill="#dcdcdc"/></svg>
<div class="t" style="left:750.5px;top:214.5px;font-family:'Liberation Serif',serif;font-weight:bold;font-size:8.5px;line-height:10px;height:10px;color:#ececec">T</div>
<svg style="left:763px;top:215px" width="8" height="8" viewBox="0 0 8 8"><rect x="1.5" y="1.5" width="5" height="5" fill="none" stroke="#dcdcdc" stroke-width=".9"/><rect x="0" y="0" width="2.4" height="2.4" fill="#dcdcdc"/><rect x="5.6" y="0" width="2.4" height="2.4" fill="#dcdcdc"/><rect x="0" y="5.6" width="2.4" height="2.4" fill="#dcdcdc"/><rect x="5.6" y="5.6" width="2.4" height="2.4" fill="#dcdcdc"/></svg>
<svg style="left:777.5px;top:214.5px" width="8" height="9" viewBox="0 0 8 9"><path d="M.5.5H4.8L7.5 3V8.5H.5Z" fill="#dcdcdc"/><rect x="3.2" y="5" width="3.6" height="2.8" fill="#535353"/><path d="M4 5V4.2Q5 3.2 6 4.2V5" fill="none" stroke="#535353" stroke-width=".7"/></svg>
<div class="a" style="left:792.5px;top:214px;width:5px;height:10px;background:#3c3c3c;border-radius:2.5px"></div>
<div class="a" style="left:792.5px;top:213.5px;width:5px;height:5px;background:#e6e6e6;border-radius:2.5px"></div>
<div class="a" style="left:661px;top:227.5px;width:139px;height:1px;background:#484848"></div>
<div class="fld" style="left:663px;top:230px;width:76px;height:10.5px;padding-left:3.5px">Normal</div>
<svg style="left:732px;top:233.5px" width="5" height="4" viewBox="0 0 5 4"><path d="M.5.7L2.5 2.9L4.5.7" fill="none" stroke="#cfcfcf" stroke-width=".9"/></svg>
<div class="t" style="left:743.5px;top:231.5px;font-size:6px;color:#d4d4d4">Opacity:</div>
<div class="fld" style="left:768px;top:230px;width:21px;height:10.5px;padding-left:2px">100%</div>
<div class="a" style="left:788.5px;top:230px;width:9px;height:10.5px;border:1px solid #666;border-left:0;background:#4d4d4d"></div>
<svg style="left:790.5px;top:233.5px" width="5" height="4" viewBox="0 0 5 4"><path d="M.5.7L2.5 2.9L4.5.7" fill="none" stroke="#cfcfcf" stroke-width=".9"/></svg>
<div class="a" style="left:661px;top:243.5px;width:139px;height:1px;background:#484848"></div>
<div class="t" style="left:664px;top:247.5px;font-size:6px;color:#d4d4d4">Lock:</div>
<svg style="left:683px;top:247.5px" width="7" height="7" viewBox="0 0 7 7"><rect x=".4" y=".4" width="6.2" height="6.2" fill="none" stroke="#dcdcdc" stroke-width=".8" stroke-dasharray="1.2 .8"/><rect x="1.8" y="1.8" width="1.7" height="1.7" fill="#dcdcdc"/><rect x="3.5" y="3.5" width="1.7" height="1.7" fill="#dcdcdc"/></svg>
<svg style="left:695.5px;top:247px" width="8" height="8" viewBox="0 0 8 8"><path d="M7.5.5L3.5 4.6L4.4 5.5Z" fill="#dcdcdc" stroke="#dcdcdc" stroke-width=".6"/><path d="M3 5Q1.6 5.3.6 7.6Q3 7.4 3.9 5.9Z" fill="#dcdcdc"/></svg>
<svg style="left:708.5px;top:247px" width="8" height="8" viewBox="0 0 11 11"><path d="M5.5 -.3L8 2.7H6.4V4.6H8.3V3L11.3 5.5L8.3 8V6.4H6.4V8.3H8L5.5 11.3L3 8.3H4.6V6.4H2.7V8L-.3 5.5L2.7 3V4.6H4.6V2.7H3Z" fill="#dcdcdc"/></svg>
<svg style="left:721.5px;top:247px" width="8" height="8" viewBox="0 0 8 8"><path d="M1.8 0V6.2H8M0 1.8H6.2V8" fill="none" stroke="#dcdcdc" stroke-width=".9"/><path d="M5 .3L7.7 3" stroke="#dcdcdc" stroke-width=".8"/></svg>
<svg style="left:735px;top:246.5px" width="7" height="9" viewBox="0 0 7 9"><rect x=".3" y="3.8" width="6.4" height="5" rx=".6" fill="#dcdcdc"/><path d="M1.7 4V2.6Q3.5 .2 5.3 2.6V4" fill="none" stroke="#dcdcdc" stroke-width="1"/></svg>
<div class="t" style="left:757px;top:247.5px;font-size:6px;color:#d4d4d4">Fill:</div>
<div class="fld" style="left:768px;top:246px;width:21px;height:10.5px;padding-left:2px">100%</div>
<div class="a" style="left:788.5px;top:246px;width:9px;height:10.5px;border:1px solid #666;border-left:0;background:#4d4d4d"></div>
<svg style="left:790.5px;top:249.5px" width="5" height="4" viewBox="0 0 5 4"><path d="M.5.7L2.5 2.9L4.5.7" fill="none" stroke="#cfcfcf" stroke-width=".9"/></svg>
<div class="a" style="left:661px;top:259px;width:139px;height:1px;background:#474747"></div>
<div class="a" style="left:661px;top:259.5px;width:139px;height:151.5px;background:#4b4b4b"></div><div class="a" style="left:661px;top:260px;width:130px;height:30.5px;background:#535353"></div><div class="a" style="left:661px;top:260px;width:17px;height:14.5px;background:#585858"></div><div class="a" style="left:678.5px;top:260px;width:112.5px;height:14.5px;background:#6b6b6b"></div><div class="a" style="left:677.7px;top:260px;width:.8px;height:30.5px;background:#474747"></div>
<div class="a" style="left:661px;top:274.5px;width:130px;height:1px;background:#474747"></div>
<div class="a" style="left:661px;top:290.5px;width:130px;height:1px;background:#474747"></div>

<svg style="left:665.5px;top:264.5px" width="8" height="6" viewBox="0 0 8 6"><path d="M.2 3Q4 -1.8 7.8 3Q4 7.8 .2 3Z" fill="#f0f0f0"/><circle cx="4" cy="3" r="1.4" fill="#4a4a4a"/></svg>
<svg style="left:665.5px;top:279.5px" width="8" height="6" viewBox="0 0 8 6"><path d="M.2 3Q4 -1.8 7.8 3Q4 7.8 .2 3Z" fill="#f0f0f0"/><circle cx="4" cy="3" r="1.4" fill="#4a4a4a"/></svg>
<svg style="left:679px;top:260px" width="22" height="14" viewBox="0 0 22 14"><path d="M.5 3.5V.5H4M8 .5H14M18 .5H21.5V3.5M21.5 6V8.5M21.5 10.5V13.5H18M14 13.5H8M4 13.5H.5V10.5M.5 8.5V6" fill="none" stroke="#e0e0e0" stroke-width="1"/><text x="11.4" y="10" text-anchor="middle" font-family="Liberation Serif,serif" font-weight="bold" font-size="7.8" fill="#efefef" stroke="#efefef" stroke-width=".3">T</text></svg>
<div class="t" style="left:705px;top:263.5px;font-size:6px;color:#efefef">Dat</div>
<div class="a" style="left:681px;top:277.5px;width:18.5px;height:10.5px;background:#fff;border:.5px solid #222"></div>
<div class="t" style="left:705px;top:278.5px;font-size:6px;font-style:italic;color:#e6e6e6">Background</div>
<svg style="left:775px;top:278.5px" width="6" height="8" viewBox="0 0 6 8"><rect x=".5" y="3.3" width="5" height="4.2" rx=".5" fill="none" stroke="#d6d6d6" stroke-width=".9"/><path d="M1.5 3.3V2.2Q3 .1 4.5 2.2V3.3" fill="none" stroke="#d6d6d6" stroke-width=".9"/></svg>
<div class="a" style="left:661px;top:410.8px;width:139px;height:1px;background:#434343"></div><div class="a" style="left:637px;top:425.8px;width:163px;height:1.2px;background:#484848"></div>
<svg style="left:680.5px;top:416.3px" width="9" height="5" viewBox="0 0 9 5"><rect x=".5" y=".8" width="4" height="3.2" rx="1.6" fill="none" stroke="#8a8a8a" stroke-width=".9"/><rect x="4.3" y=".8" width="4" height="3.2" rx="1.6" fill="none" stroke="#8a8a8a" stroke-width=".9"/></svg>
<div class="t" style="left:697.5px;top:413.8px;font-family:'Liberation Serif',serif;font-style:italic;font-weight:bold;font-size:8.5px;line-height:9px;height:9px;color:#e8e8e8;letter-spacing:-.3px">fx</div>
<svg style="left:705.5px;top:422.8px" width="2" height="2" viewBox="0 0 2 2"><path d="M2 0V2H0Z" fill="#ddd"/></svg>
<svg style="left:712px;top:414.8px" width="8" height="7" viewBox="0 0 8 7"><rect x="0" y="0" width="8" height="7" rx=".6" fill="#e6e6e6"/><circle cx="4" cy="3.5" r="2" fill="#444"/></svg>
<svg style="left:728.5px;top:414.3px" width="8" height="8" viewBox="0 0 8 8"><circle cx="4" cy="4" r="3.4" fill="none" stroke="#e6e6e6" stroke-width="1"/><path d="M1.6 6.4A3.4 3.4 0 0 1 6.4 1.6Z" fill="#e6e6e6"/></svg>
<svg style="left:737.5px;top:422.8px" width="2" height="2" viewBox="0 0 2 2"><path d="M2 0V2H0Z" fill="#ddd"/></svg>
<svg style="left:744.5px;top:414.8px" width="8" height="7" viewBox="0 0 8 7"><path d="M0 0H3.2L4 1.2H8V7H0Z" fill="#e6e6e6"/></svg>
<svg style="left:760.5px;top:414.8px" width="7" height="7" viewBox="0 0 8 8"><path d="M.5.5H7.5V5L5 7.5H.5Z" fill="none" stroke="#e6e6e6" stroke-width="1"/><path d="M7.5 5H5V7.5" fill="#e6e6e6" stroke="#e6e6e6" stroke-width=".6"/></svg>
<svg style="left:776px;top:413.8px" width="8" height="9" viewBox="0 0 8 9"><path d="M0 1.7H8M2.8 1.5V.5H5.2V1.5" fill="none" stroke="#e6e6e6" stroke-width="1"/><path d="M1 2.8H7L6.5 9H1.5Z" fill="#e6e6e6"/><path d="M3 4V8M5 4V8" stroke="#535353" stroke-width=".6"/></svg>
</div>

<div class="a" style="left:798.6px;top:37px;width:1.4px;height:390px;background:#5a5a5a"></div>
<div id="annot">
<div class="a" style="left:132px;top:139px;width:357px;height:148px;border:3px solid #fe0000"></div>
<div class="a" style="left:658px;top:77px;width:136px;height:61.8px;border:3px solid #fe0000"></div>
<svg style="left:0;top:0" width="800" height="427" viewBox="0 0 800 427">
<defs><clipPath id="c1"><path d="M80 110H112.4V167.5Q112.4 171.2 108.8 171.2H105.4Q101.8 171.2 101.8 167.5V153H80Z"/></clipPath></defs><g clip-path="url(#c1)"><text id="n1" transform="translate(90.6,168.2) scale(.9,1)" font-family="Liberation Sans,sans-serif" font-size="62" fill="#fe0000" stroke="#fe0000" stroke-width="5.5" stroke-linejoin="round">1</text></g>
<text id="n2" transform="translate(614.8,110) scale(.87,1)" font-family="Liberation Sans,sans-serif" font-size="63" fill="#fe0000" stroke="#fe0000" stroke-width="5.5" stroke-linejoin="round" style="filter:drop-shadow(0 0 7px rgba(0,0,0,.5))">2</text>
</svg>
<div class="t" style="left:628.5px;top:382px;font-size:11.7px;line-height:14px;height:14px;color:rgba(190,190,190,.6)">Activate Windows</div>
<div class="t" style="left:628.5px;top:396.5px;font-size:8.8px;line-height:10px;height:10px;color:rgba(190,190,190,.6)">Go to Settings to activate Windows.</div>
</div>
</div></body></html>
